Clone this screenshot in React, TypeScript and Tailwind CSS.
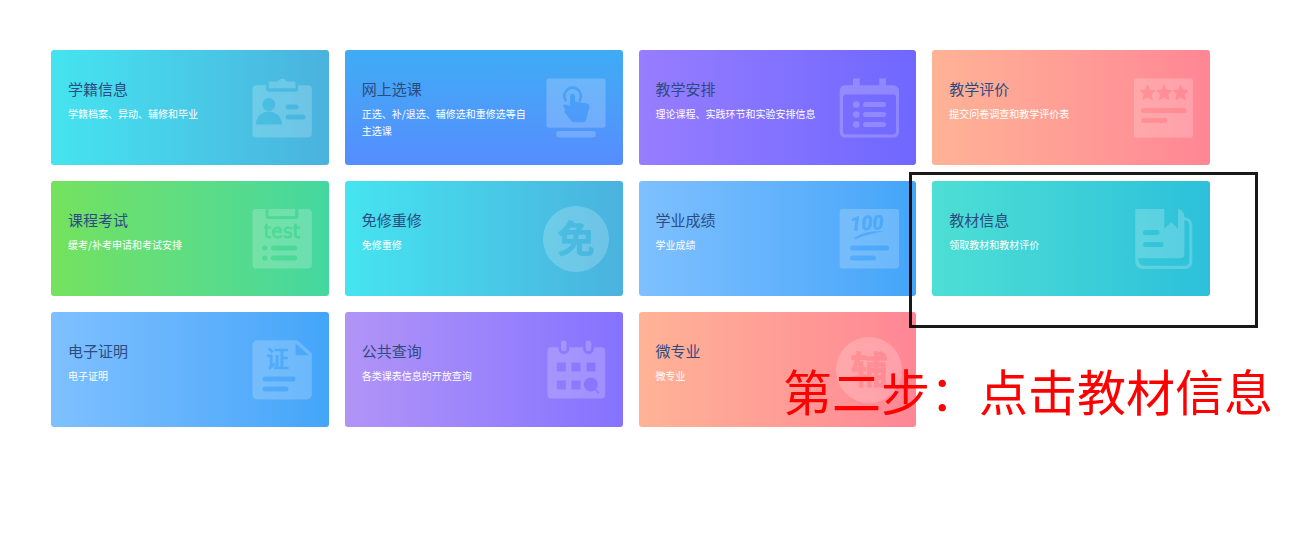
import { useId, type ReactNode } from "react";
import { clsx } from "clsx";

type Entry = {
  title: string;
  description: string;
  background: string;
  icon: ReactNode;
  highlighted?: boolean;
};

type IconProps = {
  holes?: ReactNode;
  children: ReactNode;
};

// Translucent white shape; whatever is passed as `holes` is punched out of it.
function TileIcon({ holes, children }: IconProps) {
  const maskId = useId();

  return (
    <svg viewBox="0 0 66 66" className="size-[66px] shrink-0" aria-hidden="true">
      <mask id={maskId} maskUnits="userSpaceOnUse" x="0" y="0" width="66" height="66">
        <rect width="66" height="66" fill="white" />
        <g fill="black">{holes}</g>
      </mask>
      <g fill="white" opacity="0.2">
        <g mask={`url(#${maskId})`}>{children}</g>
      </g>
    </svg>
  );
}

function Bar({ x, y, width }: { x: number; y: number; width: number }) {
  return <rect x={x} y={y} width={width} height="5" rx="2.5" />;
}

function RecordIcon() {
  return (
    <TileIcon
      holes={
        <>
          <path d="M17.2 9h2.6v4.2h26.7V9h2.7v5a2.8 2.8 0 0 1-2.8 2.8H20a2.8 2.8 0 0 1-2.8-2.8z" />
          <circle cx="19.8" cy="29.5" r="6.5" />
          <path d="M6.8 49.5a13.1 13.1 0 0 1 26.2 0z" />
          <Bar x={36.5} y={29.5} width={13.3} />
          <Bar x={36.5} y={39.5} width={20} />
        </>
      }
    >
      <path d="M7.5 10.2h12.3V8.3a1.8 1.8 0 0 1 1.8-1.8h6.6c1.4 0 2-3 5-3s3.6 3 5 3h6.5a1.8 1.8 0 0 1 1.8 1.8v1.9h12.3a4 4 0 0 1 4 4v44.3a4 4 0 0 1-4 4H7.5a4 4 0 0 1-4-4V14.2a4 4 0 0 1 4-4z" />
    </TileIcon>
  );
}

function SelectIcon() {
  return (
    <TileIcon
      holes={
        <>
          <path
            d="M22.5 25.3a8.3 8.3 0 1 1 14.2 0"
            fill="none"
            stroke="black"
            strokeWidth="2.7"
            strokeLinecap="round"
          />
          <path d="M27.1 21.3a2.5 2.5 0 0 1 5 0v5.2l10.7 1.8c2.5.5 3.8 1.6 3.6 4L43.2 44.500a3.8 3.8 0 0 1-3.6 2.7h-8.4c-1.5 0-2.5-.6-3.400-1.7l-6.800-9.300 1.600-1.200-2.800-4.600c2-1.400 4.600-1.300 7.300 1z" />
        </>
      }
    >
      <rect x="3.5" y="3.5" width="59" height="49.3" rx="2.5" />
      <rect x="13.2" y="56" width="39.6" height="6.5" rx="3.2" />
    </TileIcon>
  );
}

function ScheduleIcon() {
  return (
    <TileIcon>
      <path
        fillRule="evenodd"
        d="M17 3.5h6.7v6.7h19.6V3.5H50v6.7h7.5a5.5 5.5 0 0 1 5.5 5.5V57a5.5 5.5 0 0 1-5.5 5.5H9.2A5.5 5.5 0 0 1 3.7 57V15.7a5.5 5.5 0 0 1 5.500-5.500H17zM10 19.500a3 3 0 0 0-3 3v34a3 3 0 0 0 3 3h47a3 3 0 0 0 3-3v-34a3 3 0 0 0-3-3z"
      />
      {[29.5, 39.5, 49.5].map((y) => (
        <g key={y}>
          <circle cx="20.3" cy={y} r="3.3" />
          <Bar x={27} y={y - 2.5} width={23} />
        </g>
      ))}
    </TileIcon>
  );
}

function RatingIcon() {
  return (
    <TileIcon
      holes={
        <>
          {[17.6, 34.2, 50.6].map((x) => (
            <path
              key={x}
              transform={`translate(${x} 17.8)`}
              stroke="black"
              strokeWidth="1"
              strokeLinejoin="round"
              d="M0-7.8 2.2-2.7 7.4-2.2 3.5 1.4 4.7 6.8 0 4 -4.7 6.8 -3.5 1.4 -7.4-2.2 -2.2-2.7z"
            />
          ))}
          <Bar x={11} y={33} width={45.6} />
          <Bar x={11} y={43} width={26} />
        </>
      }
    >
      <rect x="4" y="3.5" width="59" height="59" rx="2.5" />
    </TileIcon>
  );
}

function ExamIcon() {
  return (
    <TileIcon
      holes={
        <>
          <path d="M16.500 3h3v7h26.700V3h3.300v7.200a2.800 2.800 0 0 1-2.800 2.800H19.300a2.800 2.800 0 0 1-2.800-2.800z" />
          <text
            x="33"
            y="32"
            textAnchor="middle"
            stroke="black"
            strokeWidth="0.8"
            strokeLinejoin="round"
            className="font-['DejaVu_Sans',sans-serif] text-[19px]"
          >
            test
          </text>
          <circle cx="15.8" cy="42" r="2.6" />
          <Bar x={22} y={39.5} width={26} />
          <circle cx="15.8" cy="52" r="2.6" />
          <Bar x={22} y={49.5} width={26} />
        </>
      }
    >
      <rect x="3.5" y="3" width="59.3" height="59.5" rx="4" />
    </TileIcon>
  );
}

function CharacterIcon({ character }: { character: string }) {
  return (
    <TileIcon
      holes={
        <text
          x="33"
          y="47"
          textAnchor="middle"
          stroke="black"
          strokeWidth="1.6"
          strokeLinejoin="round"
          className="font-['Noto_Sans_CJK_SC',sans-serif] text-[37px] font-medium"
        >
          {character}
        </text>
      }
    >
      <circle cx="33" cy="33" r="33" />
    </TileIcon>
  );
}

function ScoreIcon() {
  return (
    <TileIcon
      holes={
        <>
          <text
            x="31"
            y="24"
            textAnchor="middle"
            transform="rotate(-3 32 20)"
            stroke="black"
            strokeWidth="0.6"
            className="font-['Roboto',sans-serif] text-[20px] font-bold italic"
          >
            100
          </text>
          <path d="M18.8 31.8C25 27 36 24.200 47.500 25.500 37 26.800 27.500 29.500 19.800 33.200c-.8.300-1.700-.7-1-1.400z" />
          <Bar x={14} y={39.5} width={39} />
          <Bar x={14} y={49.5} width={26} />
        </>
      }
    >
      <rect x="3.7" y="3" width="59.3" height="59.5" rx="3" />
    </TileIcon>
  );
}

function BookIcon() {
  return (
    <TileIcon
      holes={
        <>
          <Bar x={13} y={24} width={16.6} />
          <Bar x={13} y={36} width={20.6} />
        </>
      }
    >
      <path
        fillRule="evenodd"
        d="M5.300 3h29v19.700l6.800-6.400 6.900 6.400V3c3.500.5 6.300 3.500 6.300 7v1.300c4.500.3 8 3.300 8 7.700v37a7 7 0 0 1-7 7H12.300a7 7 0 0 1-7-7zM8.300 52.300c0 4.500 2 7.400 6 7.400H55a4.300 4.300 0 0 0 4.300-4.300V19c0-2.500-2-4.500-5-4.700V48.300a4 4 0 0 1-4 4z"
      />
    </TileIcon>
  );
}

function CertificateIcon() {
  return (
    <TileIcon
      holes={
        <>
          <path d="M46.5 6.2 59.8 18.2H49a2.5 2.5 0 0 1-2.5-2.5z" />
          <text
            x="28.5"
            y="29.5"
            textAnchor="middle"
            stroke="black"
            strokeWidth="0.6"
            className="font-['Noto_Sans_CJK_SC',sans-serif] text-[23px] font-medium"
          >
            证
          </text>
          <Bar x={13.5} y={39.5} width={33} />
          <Bar x={13.5} y={49.5} width={26} />
        </>
      }
    >
      <path d="M8.500 3.200h39.700l14.600 13v41.300a5 5 0 0 1-5 5H8.500a5 5 0 0 1-5-5V8.200a5 5 0 0 1 5-5z" />
    </TileIcon>
  );
}

function QueryIcon() {
  return (
    <TileIcon
      holes={
        <>
          <path d="M15.400 9H18v2.500a2.800 2.800 0 0 0 5.600 0V9h2.600v2.800a5.400 5.400 0 0 1-10.800 0z" />
          <path d="M40.100 9h2.600v2.500a2.800 2.800 0 0 0 5.600 0V9h2.600v2.800a5.400 5.400 0 0 1-10.800 0z" />
          <path d="M13.800 25.500h9v9h-9zM28.500 25.500h9v9h-9zM43.500 25.500h9v9h-9zM13.800 43.500h9v9h-9zM28.500 43.500h9v9h-9z" />
          <circle cx="47.8" cy="47.5" r="7" />
          <path d="m51 51 4.500 4.500" stroke="black" strokeWidth="1.5" strokeLinecap="round" />
        </>
      }
    >
      <path d="M8.500 10.200H18V6.300a2.800 2.800 0 0 1 5.600 0v3.900h19.100V6.300a2.800 2.800 0 0 1 5.600 0v3.900h9.900a4 4 0 0 1 4 4v43.300a4 4 0 0 1-4 4H8.500a4 4 0 0 1-4-4V14.200a4 4 0 0 1 4-4z" />
    </TileIcon>
  );
}

const ENTRIES: Entry[] = [
  {
    title: "学籍信息",
    description: "学籍档案、异动、辅修和毕业",
    background: "bg-linear-to-r from-[#45e4f0] to-[#4ab2de]",
    icon: <RecordIcon />,
  },
  {
    title: "网上选课",
    description: "正选、补/退选、辅修选和重修选等自主选课",
    background: "bg-linear-to-b from-[#3eacf4] to-[#568dff]",
    icon: <SelectIcon />,
  },
  {
    title: "教学安排",
    description: "理论课程、实践环节和实验安排信息",
    background: "bg-linear-to-r from-[#977dff] to-[#6f67ff]",
    icon: <ScheduleIcon />,
  },
  {
    title: "教学评价",
    description: "提交问卷调查和教学评价表",
    background: "bg-linear-to-r from-[#ffb396] to-[#ff8695]",
    icon: <RatingIcon />,
  },
  {
    title: "课程考试",
    description: "缓考/补考申请和考试安排",
    background: "bg-linear-to-r from-[#74e25d] to-[#43d7a0]",
    icon: <ExamIcon />,
  },
  {
    title: "免修重修",
    description: "免修重修",
    background: "bg-linear-to-r from-[#45e4f0] to-[#4ab2de]",
    icon: <CharacterIcon character="免" />,
  },
  {
    title: "学业成绩",
    description: "学业成绩",
    background: "bg-linear-to-r from-[#7ec0ff] to-[#43a5f9]",
    icon: <ScoreIcon />,
  },
  {
    title: "教材信息",
    description: "领取教材和教材评价",
    background: "bg-linear-to-r from-[#4ddfd4] to-[#2cc0db]",
    icon: <BookIcon />,
    highlighted: true,
  },
  {
    title: "电子证明",
    description: "电子证明",
    background: "bg-linear-to-r from-[#7ec0ff] to-[#43a5f9]",
    icon: <CertificateIcon />,
  },
  {
    title: "公共查询",
    description: "各类课表信息的开放查询",
    background: "bg-linear-to-r from-[#b294f7] to-[#8572ff]",
    icon: <QueryIcon />,
  },
  {
    title: "微专业",
    description: "微专业",
    background: "bg-linear-to-r from-[#ffb396] to-[#ff8695]",
    icon: <CharacterIcon character="辅" />,
  },
];

function EntryCard({ entry }: { entry: Entry }) {
  return (
    <li className="relative">
      <a
        href="#"
        className={clsx("flex min-h-[115px] items-center gap-3 rounded-[3px] pr-[14px] pl-[17px]", entry.background)}
      >
        <div className="min-w-0 flex-1 self-start pt-[29px] pb-3">
          <h2 className="text-[15px] leading-5 text-[#2c4c80]">{entry.title}</h2>
          <p className="mt-[6px] text-[10px] leading-[17px] text-white">{entry.description}</p>
        </div>
        {entry.icon}
      </a>
      {entry.highlighted && (
        <div className="pointer-events-none absolute -top-[9px] -left-[23px] z-10 h-[156px] w-[349px] border-[3px] border-black/90" />
      )}
    </li>
  );
}

export default function App() {
  return (
    <main className="relative min-h-screen bg-white pt-[50px] pr-[98px] pb-12 pl-[51px] font-['Noto_Sans_CJK_SC',sans-serif]">
      <ul className="grid grid-cols-4 gap-4">
        {ENTRIES.map((entry) => (
          <EntryCard key={entry.title} entry={entry} />
        ))}
      </ul>
      <p className="pointer-events-none absolute top-[355px] right-[35px] z-20 text-[49px] leading-[70px] whitespace-nowrap text-[#ff0000]">
        第二步：点击教材信息
      </p>
    </main>
  );
}
